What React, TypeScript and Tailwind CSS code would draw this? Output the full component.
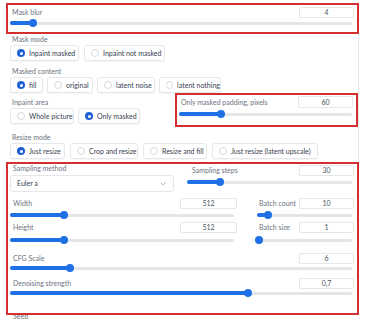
import { ChevronDown } from "lucide-react"

function Slider({ pct, className = "" }: { pct: number; className?: string }) {
  return (
    <div className={`relative h-[8px] ${className}`}>
      <div className="absolute inset-x-0 top-[2.5px] h-[3px] rounded-full bg-[#e3e5e8]" />
      <div className="absolute left-0 top-[2px] h-[4px] rounded-full bg-[#1f6fe5]" style={{ width: `${pct}%` }} />
      <div
        className="absolute top-0 -ml-[4px] h-[8px] w-[8px] rounded-full bg-[#1f6fe5]"
        style={{ left: `${pct}%` }}
      />
    </div>
  )
}

function NumBox({ value, className = "w-[55px] h-[11px]" }: { value: string; className?: string }) {
  return (
    <div
      className={`flex items-center justify-center rounded-[2px] border border-[#e5e7eb] bg-white text-[#4b5563] ${className}`}
    >
      {value}
    </div>
  )
}

function Radio({ label, checked = false, w }: { label: string; checked?: boolean; w: string }) {
  return (
    <div
      className={`flex h-[16px] items-center gap-[4px] whitespace-nowrap rounded-[3px] border border-[#e5e7eb] bg-white pl-[6px] text-[#374151] shadow-[0_1px_1px_rgba(0,0,0,0.04)] ${w}`}
    >
      {checked ? (
        <span className="flex h-[8px] w-[8px] items-center justify-center rounded-full bg-[#1f5fd6]">
          <span className="h-[3px] w-[3px] rounded-full bg-white" />
        </span>
      ) : (
        <span className="h-[8px] w-[8px] rounded-full border border-[#d6d9de] bg-white" />
      )}
      <span>{label}</span>
    </div>
  )
}

function Label({ children, className = "" }: { children: string; className?: string }) {
  return <div className={`h-[10px] leading-[10px] text-[#6b7280] ${className}`}>{children}</div>
}

export default function App() {
  return (
    <div className="h-[320px] w-[365px] overflow-hidden bg-white px-[6px] pt-[3px] font-[Lato,sans-serif] text-[7px]">
      {/* mask blur */}
      <div className="h-[31px] border-2 border-[#d32f2f]">
        <div className="mt-[2px] flex h-[11px] items-center justify-between">
          <span className="pl-[4px] text-[#6b7280]">Mask blur</span>
          <NumBox value="4" className="mr-[3px] h-[11px] w-[55px]" />
        </div>
        <Slider pct={6.7} className="ml-[2px] mr-[5px] mt-[1px]" />
      </div>

      <div className="h-[128px] border-r border-[#e5e7eb] pl-[4px]">
        <Label className="pl-[2px]">Mask mode</Label>
        <div className="mt-[1px] flex gap-[5px]">
          <Radio label="Inpaint masked" checked w="w-[69px]" />
          <Radio label="Inpaint not masked" w="w-[81px]" />
        </div>

        <Label className="mt-[5px] pl-[2px]">Masked content</Label>
        <div className="mt-[1px] flex gap-[4px]">
          <Radio label="fill" checked w="w-[33px]" />
          <Radio label="original" w="w-[46px]" />
          <Radio label="latent noise" w="w-[58px]" />
          <Radio label="latent nothing" w="w-[62px]" />
        </div>

        <div className="flex h-[34px] justify-between">
          <div className="pt-[4px]">
            <Label className="pl-[2px]">Inpaint area</Label>
            <div className="mt-[1px] flex gap-[4px]">
              <Radio label="Whole picture" w="w-[64px]" />
              <Radio label="Only masked" checked w="w-[62px]" />
            </div>
          </div>
          <div className="h-[34px] w-[183px] border-2 border-[#d32f2f]">
            <div className="mt-[1px] flex h-[12px] items-center justify-between">
              <span className="pl-[4px] text-[#6b7280]">Only masked padding, pixels</span>
              <NumBox value="60" className="mr-[3px] h-[12px] w-[55px]" />
            </div>
            <Slider pct={24} className="ml-[2px] mr-[4px] mt-[2px]" />
          </div>
        </div>

        <Label className="mt-[5px] pl-[2px]">Resize mode</Label>
        <div className="mt-[1px] flex gap-[5px]">
          <Radio label="Just resize" checked w="w-[55px]" />
          <Radio label="Crop and resize" w="w-[68px]" />
          <Radio label="Resize and fill" w="w-[64px]" />
          <Radio label="Just resize (latent upscale)" w="w-[106px]" />
        </div>
      </div>

      {/* generation settings */}
      <div className="relative z-10 h-[153px] border-2 border-[#d32f2f]">
        <div className="flex h-[32px]">
          <div className="w-[172px] pl-[2px]">
            <div className="h-[8px] pl-[3px] leading-[8px] text-[#6b7280]">Sampling method</div>
            <div className="mt-[3px] flex h-[17px] w-[164px] items-center justify-between rounded-[3px] border border-[#e5e7eb] pl-[6px] pr-[6px] text-[#374151]">
              <span>Euler a</span>
              <ChevronDown size={8} strokeWidth={1.5} className="text-[#6b7280]" />
            </div>
          </div>
          <div className="ml-[5px] flex-1">
            <div className="mt-[1px] flex h-[11px] items-center justify-between">
              <span className="pl-[7px] text-[#6b7280]">Sampling steps</span>
              <NumBox value="30" className="mr-[3px] h-[11px] w-[55px]" />
            </div>
            <Slider pct={20} className="ml-[2px] mr-[5px] mt-[2px]" />
          </div>
        </div>

        <div className="mt-[2px] flex">
          <div className="w-[232px]">
            <div className="flex h-[11px] items-center justify-between">
              <span className="pl-[5px] text-[#6b7280]">Width</span>
              <NumBox value="512" className="mr-[3px] h-[11px] w-[57px]" />
            </div>
            <Slider pct={24} className="ml-[2px] mr-[6px] mt-[2px]" />
          </div>
          <div className="ml-[15px] flex-1">
            <div className="flex h-[11px] items-center justify-between">
              <span className="pl-[4px] text-[#6b7280]">Batch count</span>
              <NumBox value="10" className="mr-[3px] h-[11px] w-[55px]" />
            </div>
            <Slider pct={12} className="ml-[2px] mr-[5px] mt-[2px]" />
          </div>
        </div>

        <div className="mt-[3px] flex">
          <div className="w-[232px]">
            <div className="flex h-[11px] items-center justify-between">
              <span className="pl-[5px] text-[#6b7280]">Height</span>
              <NumBox value="512" className="mr-[3px] h-[11px] w-[57px]" />
            </div>
            <Slider pct={24} className="ml-[2px] mr-[6px] mt-[3px]" />
          </div>
          <div className="ml-[15px] flex-1">
            <div className="flex h-[11px] items-center justify-between">
              <span className="pl-[4px] text-[#6b7280]">Batch size</span>
              <NumBox value="1" className="mr-[3px] h-[11px] w-[55px]" />
            </div>
            <Slider pct={2} className="ml-[2px] mr-[5px] mt-[3px]" />
          </div>
        </div>

        <div className="mt-[9px]">
          <div className="flex h-[11px] items-center justify-between">
            <span className="pl-[5px] text-[#6b7280]">CFG Scale</span>
            <NumBox value="6" className="mr-[3px] h-[11px] w-[55px]" />
          </div>
          <Slider pct={17.5} className="ml-[2px] mr-[5px]" />
        </div>

        <div className="mt-[6px]">
          <div className="flex h-[11px] items-center justify-between">
            <span className="pl-[5px] text-[#6b7280]">Denoising strength</span>
            <NumBox value="0,7" className="mr-[3px] h-[11px] w-[55px]" />
          </div>
          <Slider pct={69.6} className="ml-[2px] mr-[5px]" />
        </div>
      </div>

      <div className="-mt-[4px] h-[10px] pl-[7px] leading-[10px] text-[#6b7280]">Seed</div>
    </div>
  )
}
